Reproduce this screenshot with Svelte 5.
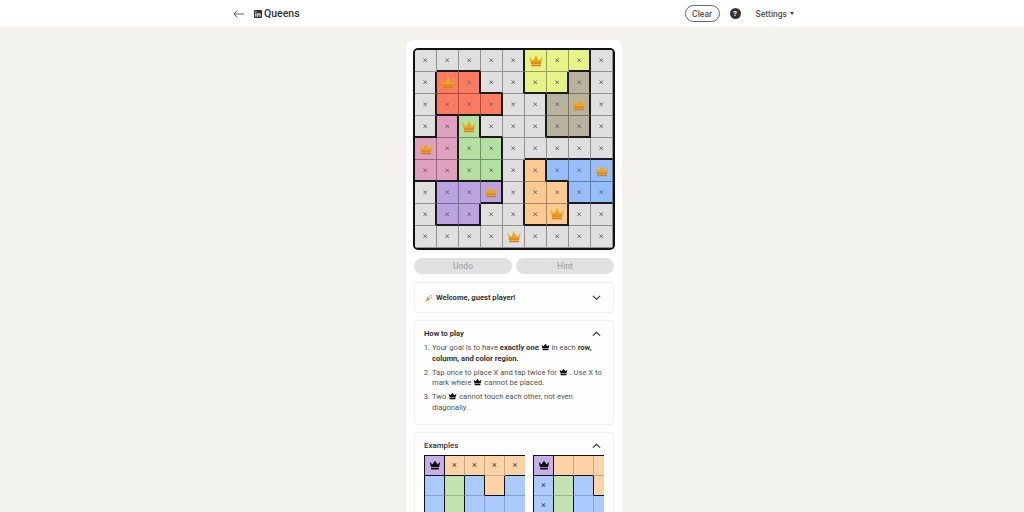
<script>
  const main = ['.....YYY.', '.RR..YYT.', '.RRR..TT.', '.PG...TT.', 'PPGG.....', 'PPGG.OBBB', '.VVV.OOBB', '.VV..OO..', '.........'];
  const crowns = ['0,5', '1,1', '2,7', '3,2', '4,0', '5,8', '6,3', '7,6', '8,4'];
  const ex = ['VOOOO', 'BGBOB', 'BGBBB'];

  function cells(map, crownKeys, markFn) {
    const out = [];
    map.forEach((row, r) => {
      [...row].forEach((c, i) => {
        const key = r + ',' + i;
        const right = i < row.length - 1 && row[i + 1] !== c;
        const below = r < map.length - 1 && map[r + 1][i] !== c;
        out.push({ key, color: c === '.' ? 'N' : c, right, below, crown: crownKeys.includes(key), mark: markFn(key) });
      });
    });
    return out;
  }
  const board = cells(main, crowns, (k) => !crowns.includes(k));
  const ex1Cells = cells(ex, ['0,0'], (k) => ['0,1', '0,2', '0,3', '0,4'].includes(k));
  const ex2Cells = cells(ex, ['0,0'], (k) => ['1,0', '2,0'].includes(k));
</script>

{#snippet gold()}
  <svg class="gold" viewBox="0 0 24 20" aria-hidden="true">
    <path d="M3.5 15 1.5 5 7 9.5 12 1.5 17 9.5 22.5 5 20.5 15z" fill="#eda31c" />
    <path d="M3.2 12 20.9 12 20.5 15.5 3.5 15.5z" fill="#de8c18" />
    <circle cx="1.6" cy="4.6" r="1.4" fill="#f2b42a" />
    <circle cx="12" cy="1.6" r="1.4" fill="#f2b42a" />
    <circle cx="22.4" cy="4.6" r="1.4" fill="#f2b42a" />
    <rect x="3.5" y="16.4" width="17" height="2.6" rx=".6" fill="#cf821c" />
  </svg>
{/snippet}

{#snippet black()}
  <svg class="black" viewBox="0 0 16 14" aria-hidden="true">
    <path d="M2.6 9.6 1 2.8l3.6 3L8 1l3.4 4.8 3.6-3-1.6 6.8zM2.8 10.6h10.4v2.2H2.8z" fill="#111" />
  </svg>
{/snippet}

{#snippet chevron(up)}
  <svg class="chev" viewBox="0 0 10 6" aria-hidden="true">
    <path d={up ? 'M1 5l4-3.6L9 5' : 'M1 1l4 3.6L9 1'} fill="none" stroke="#333" stroke-width="1.2" />
  </svg>
{/snippet}

{#snippet tile(c)}
  <div class="cell c{c.color}" class:tr={c.right} class:tb={c.below}>
    {#if c.crown}{@render gold()}{:else if c.mark}<svg class="x" viewBox="0 0 5 5" aria-hidden="true"><path d="M.6.6l3.8 3.8M4.4.6.6 4.4" stroke="#666" stroke-width="1.1" fill="none" /></svg>{/if}
  </div>
{/snippet}

{#snippet miniTile(c)}
  <div class="mini m{c.color}" class:tr={c.right} class:tb={c.below}>
    {#if c.crown}<svg class="minicrown" viewBox="0 0 16 14" aria-hidden="true"><path d="M2.6 9.6 1 2.8l3.6 3L8 1l3.4 4.8 3.6-3-1.6 6.8zM2.8 10.6h10.4v2.2H2.8z" fill="#111" /></svg>{:else if c.mark}<span class="mx">×</span>{/if}
  </div>
{/snippet}

<div class="page">
  <header>
    <div class="bar">
      <div class="left">
        <svg class="back" viewBox="0 0 14 10" aria-hidden="true">
          <path d="M13 5H1.2M5 1 1.2 5 5 9" fill="none" stroke="#444" stroke-width="1" />
        </svg>
        <svg class="logo" viewBox="0 0 10 10" aria-hidden="true">
          <rect width="10" height="10" rx="1" fill="#333" />
          <path d="M1.6 4h1.4v4.4H1.6zM1.6 1.7h1.4V3H1.6zM4 4h1.3v.6c.7-1 3-.9 3 1.2v2.6H7V6c0-1-1.6-1-1.6 0v2.4H4z" fill="#fff" />
        </svg>
        <span class="title">Queens</span>
      </div>
      <div class="right">
        <button class="clear">Clear</button>
        <span class="help">?</span>
        <span class="settings">Settings <i class="caret"></i></span>
      </div>
    </div>
  </header>

  <main>
    <section class="panel">
      <div class="board">
        {#each board as c (c.key)}{@render tile(c)}{/each}
      </div>
      <div class="actions">
        <button class="act">Undo</button>
        <button class="act">Hint</button>
      </div>

      <div class="card welcome">
        <div class="head">
          <span class="hl"><svg class="party" viewBox="0 0 10 10" aria-hidden="true"><path d="M1 9.4 3 3.2l3.8 3.8z" fill="#c9a24a" /><path d="M5 1.5l1 2-1 1zM8 3 6.6 5l2 .6z" fill="#7a8fd0" /><circle cx="7.6" cy="1.6" r=".8" fill="#d06a8a" /></svg><b>Welcome, guest player!</b></span>
          {@render chevron(false)}
        </div>
      </div>

      <div class="card how">
        <div class="head">
          <b>How to play</b>
          {@render chevron(true)}
        </div>
        <ol>
          <li>Your goal is to have <b>exactly one</b> {@render black()} in each <b>row, column, and color region.</b></li>
          <li>Tap once to place X and tap twice for {@render black()} . Use X to mark where {@render black()} cannot be placed.</li>
          <li>Two {@render black()} cannot touch each other, not even diagonally.</li>
        </ol>
      </div>

      <div class="card examples">
        <div class="head">
          <b class="light">Examples</b>
          {@render chevron(true)}
        </div>
        <div class="exrow">
          <div class="exboard">
            {#each ex1Cells as c (c.key)}{@render miniTile(c)}{/each}
          </div>
          <div class="exboard">
            {#each ex2Cells as c (c.key)}{@render miniTile(c)}{/each}
          </div>
        </div>
      </div>
    </section>
  </main>
</div>

<style>
  :global(body) {
    margin: 0;
    background: #f4f2ee;
    overflow: hidden;
  }
  .page {
    height: 512px;
    overflow: hidden;
    font-family: Roboto, "Liberation Sans", sans-serif;
    color: #333;
  }
  header {
    height: 27px;
    background: #fff;
    display: flex;
    justify-content: center;
  }
  .bar {
    width: 576px;
    padding: 0 6px 0 9px;
    box-sizing: border-box;
    display: flex;
    justify-content: space-between;
    align-items: center;
  }
  .left, .right {
    display: flex;
    align-items: center;
  }
  .back {
    width: 12px;
    height: 10px;
    margin-right: 9px;
  }
  .logo {
    width: 8px;
    height: 8px;
    margin-right: 2px;
  }
  .title {
    font-size: 10.5px;
    font-weight: 500;
    color: #333;
  }
  .clear {
    width: 35px;
    height: 17px;
    padding: 0;
    border: 1px solid #666;
    border-radius: 9px;
    background: #fff;
    color: #555;
    font: 500 8.5px Roboto, sans-serif;
    margin-right: 10px;
  }
  .help {
    width: 11px;
    height: 11px;
    border-radius: 50%;
    background: #333;
    color: #fff;
    font-size: 8px;
    font-weight: 700;
    line-height: 11px;
    text-align: center;
    margin-right: 15px;
  }
  .settings {
    font-size: 8.5px;
    font-weight: 500;
    color: #555;
    display: flex;
    align-items: center;
    gap: 3px;
    white-space: nowrap;
  }
  .caret {
    width: 0;
    height: 0;
    border: 2.5px solid transparent;
    border-top: 3px solid #444;
    border-bottom: 0;
  }
  main {
    display: flex;
    justify-content: center;
    padding: 13px 0 0 4px;
  }
  .panel {
    width: 216px;
    box-sizing: border-box;
    background: #fff;
    border-radius: 8px 8px 0 0;
    padding: 8px 7px 0;
    display: flex;
    flex-direction: column;
    height: 480px;
  }
  .board {
    width: 202px;
    height: 202px;
    box-sizing: border-box;
    border: 2px solid #111;
    border-radius: 5px;
    display: grid;
    grid-template-columns: repeat(9, 22px);
    grid-template-rows: repeat(9, 22px);
    overflow: hidden;
    flex: none;
  }
  .cell {
    box-sizing: border-box;
    border-right: 1px solid rgba(0, 0, 0, 0.35);
    border-bottom: 1px solid rgba(0, 0, 0, 0.35);
    display: flex;
    align-items: center;
    justify-content: center;
  }
  .cell.tr {
    border-right: 2px solid #1a1a1a;
  }
  .cell.tb {
    border-bottom: 2px solid #1a1a1a;
  }
  .cN { background: #dfdfdf; }
  .cY { background: #e6f388; }
  .cR { background: #ff7b60; }
  .cT { background: #b9b29e; }
  .cP { background: #dfa0bf; }
  .cG { background: #b3dfa0; }
  .cO { background: #ffc992; }
  .cB { background: #96befe; }
  .cV { background: #bba3e2; }
  .x {
    width: 4.5px;
    height: 4.5px;
  }
  .gold {
    width: 14px;
    height: 12px;
  }
  .actions {
    display: flex;
    gap: 4px;
    margin: 8px 0 8px 1px;
    width: 200px;
    flex: none;
  }
  .act {
    flex: 1;
    height: 16px;
    border: 0;
    padding: 0;
    border-radius: 8px;
    background: #e0e0e0;
    color: #a9a9a9;
    font: 500 8.5px Roboto, sans-serif;
  }
  .card {
    width: 200px;
    margin-left: 1px;
    box-sizing: border-box;
    border: 1px solid #f0f0f0;
    border-radius: 3px;
    background: #fdfdfd;
    padding: 0 9px;
    margin-bottom: 7px;
    flex: none;
  }
  .head {
    display: flex;
    justify-content: space-between;
    align-items: center;
    color: #333;
    font-size: 7.6px;
    padding-right: 3px;
  }
  .head b {
    font-weight: 700;
  }
  .head .light {
    font-weight: 500;
    font-size: 7.9px;
  }
  .hl {
    display: flex;
    align-items: center;
    gap: 3px;
  }
  .party {
    width: 8px;
    height: 8px;
    margin-left: 1px;
  }
  .chev {
    width: 9px;
    height: 5.5px;
  }
  .welcome {
    height: 31px;
    display: flex;
    flex-direction: column;
    justify-content: center;
  }
  .how {
    height: 105px;
    padding-top: 8px;
  }
  ol {
    margin: 5px 0 0;
    padding: 0 0 0 8px;
    color: #555;
    font-size: 7.6px;
    line-height: 10.5px;
  }
  li {
    margin-bottom: 3.5px;
  }
  li b {
    font-weight: 700;
    color: #333;
  }
  .black {
    width: 9px;
    height: 8px;
    vertical-align: -1px;
  }
  .examples {
    height: 100px;
    padding-top: 8px;
    overflow: hidden;
  }
  .exrow {
    display: flex;
    gap: 8px;
    margin-top: 5px;
    width: 180px;
    overflow: hidden;
  }
  .exboard {
    flex: none;
    width: 101px;
    height: 70px;
    box-sizing: border-box;
    border: 1px solid #111;
    border-bottom: 0;
    display: grid;
    grid-template-columns: repeat(5, 20px);
    grid-template-rows: repeat(3, 20px);
  }
  .mini {
    box-sizing: border-box;
    border-right: 1px solid rgba(0, 0, 0, 0.2);
    border-bottom: 1px solid rgba(0, 0, 0, 0.2);
    display: flex;
    align-items: center;
    justify-content: center;
  }
  .mini.tr { border-right: 1px solid #111; }
  .mini.tb { border-bottom: 1px solid #111; }
  .mini:nth-child(5n) { border-right: 0; }
  .mV { background: #c6aee8; }
  .mO { background: #ffd3a8; }
  .mB { background: #abcbff; }
  .mG { background: #c3e2b2; }
  .minicrown {
    width: 12px;
    height: 10.5px;
  }
  .mx {
    font-size: 9px;
    line-height: 1;
    color: #444;
  }
</style>
